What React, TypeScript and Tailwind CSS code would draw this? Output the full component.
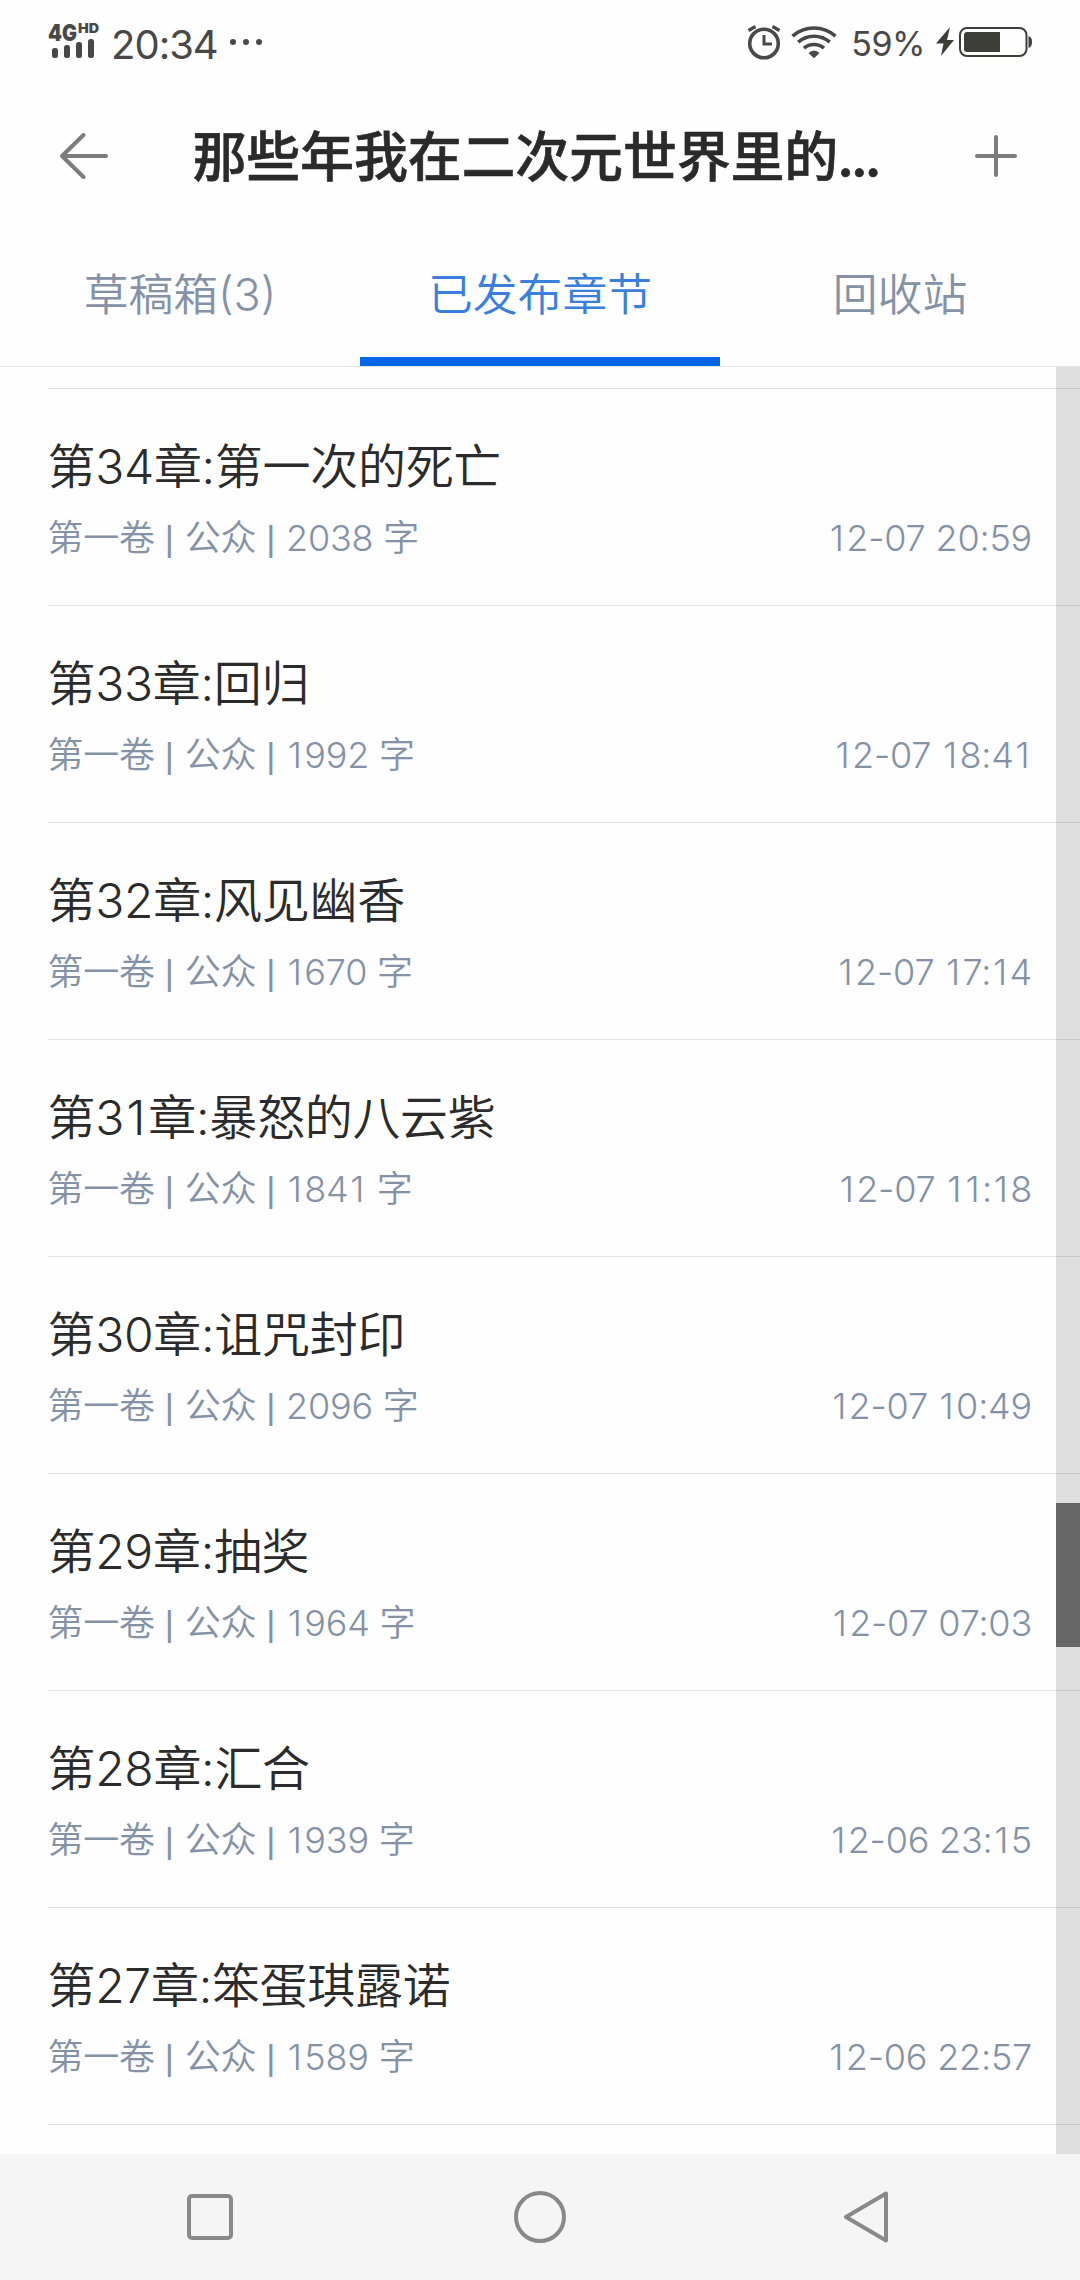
import clsx from 'clsx';

type Chapter = {
  id: number;
  name: string;
  words: number;
  date: string;
};

const tabs = ['草稿箱(3)', '已发布章节', '回收站'];

const chapters: Chapter[] = [
  { id: 34, name: '第一次的死亡', words: 2038, date: '12-07 20:59' },
  { id: 33, name: '回归', words: 1992, date: '12-07 18:41' },
  { id: 32, name: '风见幽香', words: 1670, date: '12-07 17:14' },
  { id: 31, name: '暴怒的八云紫', words: 1841, date: '12-07 11:18' },
  { id: 30, name: '诅咒封印', words: 2096, date: '12-07 10:49' },
  { id: 29, name: '抽奖', words: 1964, date: '12-07 07:03' },
  { id: 28, name: '汇合', words: 1939, date: '12-06 23:15' },
  { id: 27, name: '笨蛋琪露诺', words: 1589, date: '12-06 22:57' },
];

function Signal() {
  return (
    <svg className="overflow-visible" width="56" height="40" viewBox="0 0 56 40" fill="#484848">
      <text x="1" y="19.500" fontSize="23" fontWeight="900" textLength="29" lengthAdjust="spacingAndGlyphs">
        4G
      </text>
      <text x="31" y="12" fontSize="13" fontWeight="900" textLength="21" lengthAdjust="spacingAndGlyphs">
        HD
      </text>
      <rect x="5" y="27" width="6" height="10" rx="2.5" />
      <rect x="17" y="24" width="6" height="13" rx="2.5" />
      <rect x="29" y="21" width="6" height="16" rx="2.5" />
      <rect x="41" y="18" width="6" height="19" rx="2.5" />
    </svg>
  );
}

function AlarmIcon() {
  return (
    <svg width="34" height="36" viewBox="0 0 34 36" fill="none" stroke="#484848">
      <circle cx="17" cy="19.500" r="14.3" strokeWidth="3.6" />
      <path d="M17 11v9h8" strokeWidth="3" />
      <path d="M1.5 6.500l7-4M32.5 6.500l-7-4" strokeWidth="3.2" />
    </svg>
  );
}

function WifiIcon() {
  return (
    <svg width="46" height="34" viewBox="0 0 46 34" fill="none" stroke="#484848" strokeWidth="3.6">
      <path d="M1.5 11.2a32.5 32.5 0 0 1 43 0" />
      <path d="M7.2 17.2a23.8 23.8 0 0 1 31.6 0" />
      <path d="M13 23.2a15.2 15.2 0 0 1 20 0" />
      <path d="M17.5 28q5.5-5 11 0L23 33.3z" fill="#484848" stroke="none" />
    </svg>
  );
}

function BatteryIcon() {
  return (
    <svg width="96" height="32" viewBox="0 0 96 32" fill="#3d3e38">
      <path d="M14 1L0 17.5h7.5L5 30l13-16h-7z" />
      <rect x="24" y="2" width="66.5" height="28" rx="7" fill="none" stroke="#3d3e38" strokeWidth="2" />
      <path d="M31 6h33v20H31a3 3 0 0 1-3-3V9a3 3 0 0 1 3-3z" />
      <path d="M92.500 10q3.500 1 3.500 6t-3.500 6z" />
    </svg>
  );
}

function StatusBar() {
  return (
    <div className="flex h-[84px] items-start justify-between pr-12 pl-[47px] text-[#484848]">
      <div className="flex items-start pt-[21px]">
        <Signal />
        <span className="mt-0.5 ml-2 text-[40px] leading-[44px] tracking-[-1px]">20:34</span>
        <div className="mt-[18px] ml-3 flex gap-[7px]">
          <i className="size-1.5 rounded-full bg-[#484848]" />
          <i className="size-1.5 rounded-full bg-[#484848]" />
          <i className="size-1.5 rounded-full bg-[#484848]" />
        </div>
      </div>
      <div className="flex items-start pt-6">
        <AlarmIcon />
        <div className="ml-[10px] pt-px">
          <WifiIcon />
        </div>
        <span className="mt-px ml-[14px] text-[34px] leading-[38px] tracking-[-0.5px]">59%</span>
        <div className="ml-[11px] pt-0.5">
          <BatteryIcon />
        </div>
      </div>
    </div>
  );
}

function Header() {
  return (
    <header className="flex h-36 items-center justify-between pr-[62px] pl-[59px]">
      <svg width="50" height="48" viewBox="0 0 50 48" fill="none" stroke="#7c7c7c" strokeWidth="4" strokeLinecap="round" strokeLinejoin="round">
        <path d="M47 24H3M24.500 3L3 24l21.500 21" />
      </svg>
      <h1 className="mt-[3px] mr-1 w-[694px] text-[54px] leading-[72px] font-medium tracking-[-0.2px] whitespace-nowrap text-[#2a2a2a] [-webkit-text-stroke:0.6px_#2a2a2a]">
        那些年我在二次元世界里的<span className="-ml-px font-semibold tracking-[-3.500px]">...</span>
      </h1>
      <svg width="44" height="44" viewBox="0 0 44 44" fill="none" stroke="#7c7c7c" strokeWidth="4" strokeLinecap="round">
        <path d="M22 3v38M3 22h38" />
      </svg>
    </header>
  );
}

function Tabs({ active }: { active: number }) {
  return (
    <nav className="grid h-[139px] grid-cols-3 border-b border-[#e5e5e5]">
      {tabs.map((tab, i) => (
        <div
          key={tab}
          className={clsx(
            'flex justify-center border-b-[9px] pt-[37px] text-[44.8px] leading-[60px] font-[350]',
            i === active ? 'border-[#0066e6] text-[#3a7fdc]' : 'border-transparent text-[#8592a6]',
          )}
        >
          {tab}
        </div>
      ))}
    </nav>
  );
}

// the "1" of Inter is narrow, give it some air so the digits line up
function Digits({ value }: { value: string | number }) {
  return String(value)
    .split(/(1)/)
    .map((part, i) =>
      part === '1' ? (
        <span key={i} className="mr-[0.07em] ml-[0.05em]">
          1
        </span>
      ) : (
        part
      ),
    );
}

function Divider() {
  return <span className="mr-px font-['Liberation_Sans'] text-[35px]">|</span>;
}

function ChapterRow({ chapter }: { chapter: Chapter }) {
  return (
    <li className="ml-12 h-[217px] border-t border-[#e3e3e3] pt-[46px] pr-12">
      <div className="-ml-[0.5px] text-[48px] leading-[64px] font-[350] tracking-[-0.3px] text-[#2b2b2b]">
        第<Digits value={chapter.id} />章:{chapter.name}
      </div>
      <div className="mt-[14px] -ml-[0.5px] flex justify-between text-[36px] leading-[50px] font-[350] tracking-[-0.2px] text-[#8592a6]">
        <span>
          第一卷 <Divider /> 公众 <Divider /> <Digits value={chapter.words} /> 字
        </span>
        <span>
          <Digits value={chapter.date} />
        </span>
      </div>
    </li>
  );
}

function NavBar() {
  return (
    <div className="flex h-[126px] items-center justify-between bg-[#f5f5f5] pr-[190px] pl-[187px]">
      <div className="size-[46px] rounded-[5px] border-4 border-[#898989]" />
      <div className="ml-1 size-[52px] rounded-full border-4 border-[#898989]" />
      <svg width="48" height="52" viewBox="0 0 48 52" fill="none" stroke="#898989" strokeWidth="4" strokeLinejoin="round">
        <path d="M44 2.500L4 26l40 23.500z" />
      </svg>
    </div>
  );
}

export default function App() {
  return (
    <div className="flex h-[2280px] w-[1080px] flex-col overflow-hidden bg-[#fefefe] font-['Inter','Noto_Sans_CJK_SC',sans-serif]">
      <StatusBar />
      <Header />
      <Tabs active={1} />
      <div className="relative flex-1 overflow-hidden">
        <ul className="pt-[21px]">
          {chapters.map((chapter) => (
            <ChapterRow key={chapter.id} chapter={chapter} />
          ))}
          <li className="ml-12 border-t border-[#e3e3e3]" />
        </ul>
        {/* scrollbar */}
        <div className="absolute inset-y-0 right-0 w-6 bg-black/12">
          <div className="mt-[1136px] h-36 bg-[#666]" />
        </div>
      </div>
      <NavBar />
    </div>
  );
}
